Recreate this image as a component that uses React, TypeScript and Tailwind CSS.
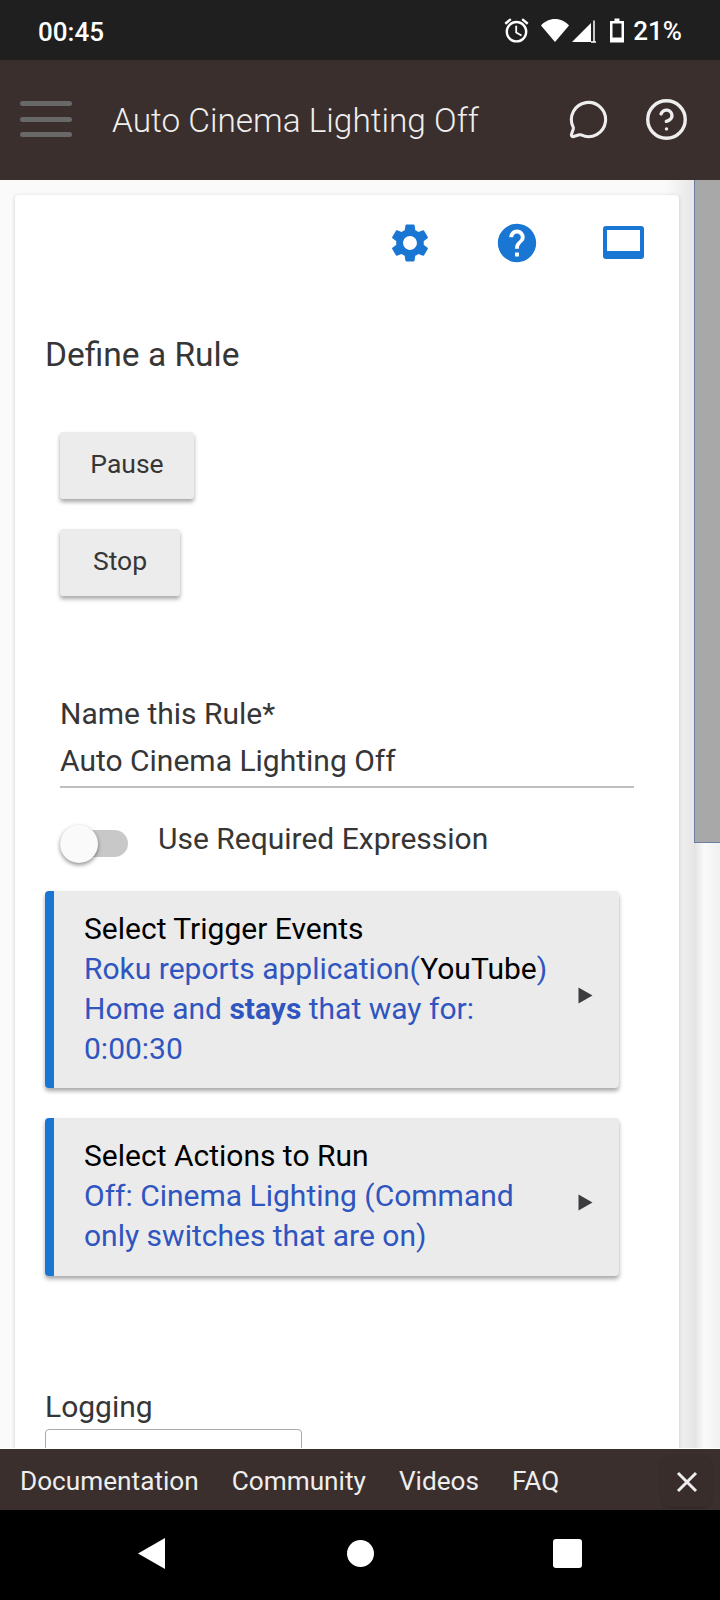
import React from "react";
import { CircleHelp, MessageCircle } from "lucide-react";
import { MdHelp, MdOutlineAlarm, MdSettings } from "react-icons/md";

function StatusBar() {
  return (
    <div className="flex h-[60px] shrink-0 items-center justify-between bg-[#1f1f1f] pl-[38px] pr-[38px] text-white">
      <span className="mt-[3px] text-[26px] font-medium leading-none">00:45</span>
      <div className="flex items-center">
        <MdOutlineAlarm size={29} className="mr-[9px]" />
        <svg width="30" height="24" viewBox="0 0 30 24" className="mr-[1px]">
          <path d="M1 7.500C4.500 3.500 9.500 1 15 1s10.500 2.500 14 6.500L15 24z" fill="#fff" />
        </svg>
        <svg width="26" height="25" viewBox="0 0 26 25" className="mr-[12px]">
          <path d="M1 24L20 5v19z" fill="#fff" />
          <path d="M23 2.500V24" stroke="#fff" strokeWidth="1.500" />
          <path d="M20 24h5" stroke="#fff" strokeWidth="1.500" />
        </svg>
        <svg width="16" height="25" viewBox="0 0 16 25" className="mr-[8px]">
          <path d="M5.500 0.500h5v2.500H15v21.500H1V3h4.500z" fill="#fff" />
          <rect x="3.500" y="5.500" width="9" height="14" fill="#1f1f1f" />
        </svg>
        <span className="mt-[2px] text-[26px] font-medium leading-none">21%</span>
      </div>
    </div>
  );
}

function AppBar() {
  return (
    <div className="flex h-[120px] shrink-0 items-center bg-[#3a2f2d] pb-[2px] text-[#eeeeee]">
      <div className="ml-[20px] flex w-[52px] flex-col gap-[10.500px]">
        <div className="h-[5px] rounded-full bg-[#686868]" />
        <div className="h-[5px] rounded-full bg-[#686868]" />
        <div className="h-[5px] rounded-full bg-[#686868]" />
      </div>
      <span className="ml-[40px] mt-[4px] flex-1 text-[33.400px] font-light leading-none">Auto Cinema Lighting Off</span>
      <MessageCircle size={41} strokeWidth={1.8} className="mr-[35px]" />
      <CircleHelp size={45} strokeWidth={1.8} className="mr-[31px] mt-[1px]" />
    </div>
  );
}

function RaisedButton({ label, width }: { label: string; width: string }) {
  return (
    <div
      className={`flex h-[67px] items-center justify-center rounded-[3px] bg-[#ececec] pb-[4px] text-[26.500px] text-[#363636] shadow-[0_3px_4px_rgba(0,0,0,0.35)] ${width}`}
    >
      {label}
    </div>
  );
}

function SelectCard({ className, children }: { className: string; children: React.ReactNode }) {
  return (
    <div
      className={`flex w-[574px] items-center rounded-[4px] border-l-[9px] border-[#1976d2] bg-[#ebebeb] pb-[2px] pl-[30px] text-[30px] leading-[40px] shadow-[0_3px_4px_rgba(0,0,0,0.35)] ${className}`}
    >
      <div className="flex-1">{children}</div>
      <svg width="15" height="17" viewBox="0 0 15 17" className="mr-[26px] mt-[13px] shrink-0">
        <path d="M0.500 0.500L14.500 8.500L0.500 16.500z" fill="#3c3c40" />
      </svg>
    </div>
  );
}

export default function App() {
  return (
    <div
      className="flex h-[1600px] w-[720px] flex-col overflow-hidden bg-[#fafafa]"
      style={{ fontFamily: "Roboto, sans-serif" }}
    >
      <StatusBar />
      <AppBar />

      <div className="flex min-h-0 flex-1 overflow-hidden">
        <div className="min-w-0 flex-1 bg-linear-to-r from-[#fafafa] from-[96%] to-[#e6e6e6] pl-[15px] pr-[15px] pt-[15px]">
          <div className="rounded-[4px] bg-white pb-10 shadow-[0_1px_4px_rgba(0,0,0,0.18)]">
            <div className="flex justify-end pr-[2px] pt-[25px] text-[#1976d2]">
              <div className="flex w-[107px] justify-center">
                <MdSettings size={46} />
              </div>
              <div className="flex w-[107px] justify-center">
                <MdHelp size={46} />
              </div>
              <div className="flex w-[107px] justify-center pt-[6px]">
                <svg width="41" height="33" viewBox="0 0 41 33" className="h-[33px]">
                  <path fillRule="evenodd" d="M3 0h35a3 3 0 0 1 3 3v27a3 3 0 0 1-3 3H3a3 3 0 0 1-3-3V3a3 3 0 0 1 3-3zM4 4v21h33V4z" fill="#1976d2" />
                </svg>
              </div>
            </div>

            <div className="ml-[30px] mt-[69px] text-[33.500px] leading-[40px] text-[#363636]">Define a Rule</div>

            <div className="ml-[45px] mt-[57px] flex flex-col gap-[30px]">
              <RaisedButton label="Pause" width="w-[134px]" />
              <RaisedButton label="Stop" width="w-[120px]" />
            </div>

            <div className="ml-[45px] mt-[94px] w-[574px] border-b-2 border-[#c0c0c0] pb-[2px] text-[30px] leading-[47px] text-[#363636]">
              <div>Name this Rule*</div>
              <div>Auto Cinema Lighting Off</div>
            </div>

            <div className="ml-[45px] mt-[31px] flex items-center text-[30px] text-[#363636]">
              <div className="relative h-[27px] w-[68px] rounded-full bg-[#c8c8c8]">
                <div className="absolute -top-[5px] left-0 h-[38px] w-[38px] rounded-full bg-[#fafafa] shadow-[0_2px_4px_rgba(0,0,0,0.45)]" />
              </div>
              <span className="mb-[8px] ml-[30px] leading-[40px]">Use Required Expression</span>
            </div>

            <SelectCard className="ml-[30px] mt-[24px] h-[197px] text-[#2f55c0]">
              <div className="text-black">Select Trigger Events</div>
              <div>
                Roku reports application(<span className="text-black">YouTube</span>)
              </div>
              <div>
                Home and <b>stays</b> that way for:
              </div>
              <div>0:00:30</div>
            </SelectCard>

            <SelectCard className="ml-[30px] mt-[30px] h-[158px] text-[#2f55c0]">
              <div className="text-black">Select Actions to Run</div>
              <div>Off: Cinema Lighting (Command</div>
              <div>only switches that are on)</div>
            </SelectCard>

            <div className="ml-[30px] mt-[111px] text-[30px] leading-[40px] text-[#363636]">Logging</div>
            <div className="ml-[30px] mt-[2px] h-[50px] w-[257px] rounded-[4px] border border-[#aaaaaa]" />
          </div>
        </div>

        <div className="w-[26px] shrink-0 bg-linear-to-r from-[#e2e2e2] via-[#fafafa] via-40% to-[#f0f0f0]">
          <div className="h-[663px] border-b border-l border-[#6b7fa0] bg-[#a8a8a8]" />
        </div>
      </div>

      <div className="relative flex h-[62px] shrink-0 items-center gap-[33px] border-t border-white bg-[#3a2f2d] pl-[20px] pt-[4px] text-[26.200px] text-[#eeeeee]">
        <span>Documentation</span>
        <span>Community</span>
        <span>Videos</span>
        <span>FAQ</span>
        <div className="absolute left-[661px] top-[7px] flex h-[51px] w-[51px] items-center justify-center rounded-[8px] bg-[#382d2b] shadow-[0_1px_2px_rgba(0,0,0,0.2)]">
          <svg width="22" height="22" viewBox="0 0 22 22">
            <path d="M2 2l18 18M20 2L2 20" stroke="#eeeeee" strokeWidth="3" />
          </svg>
        </div>
      </div>

      <div className="flex h-[90px] shrink-0 items-center justify-between bg-black pb-[3px] pl-[138px] pr-[138px]">
        <svg width="27" height="31" viewBox="0 0 27 31">
          <path d="M27 0v31L0 15.500z" fill="#fff" />
        </svg>
        <div className="ml-[2px] h-[27px] w-[27px] rounded-full bg-white" />
        <div className="h-[29px] w-[29px] rounded-[3px] bg-white" />
      </div>
    </div>
  );
}
